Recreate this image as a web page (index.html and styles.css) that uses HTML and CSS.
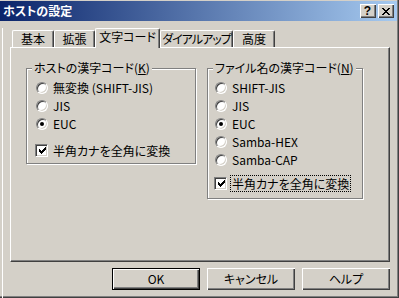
FILE: index.html
```html
<!DOCTYPE html>
<html lang="ja">
<head>
<meta charset="utf-8">
<title>ホストの設定</title>
<link rel="stylesheet" href="styles.css">
</head>
<body>
<div class="window">
  <div class="titlebar">
    <span class="title">ホストの設定</span>
    <div class="caps">
      <span class="cap help">?</span>
      <span class="cap close">
        <svg width="8" height="7" viewBox="0 0 8 7" shape-rendering="crispEdges">
          <rect x="0" y="0" width="2" height="1"/><rect x="6" y="0" width="2" height="1"/>
          <rect x="1" y="1" width="2" height="1"/><rect x="5" y="1" width="2" height="1"/>
          <rect x="2" y="2" width="4" height="1"/>
          <rect x="3" y="3" width="2" height="1"/>
          <rect x="2" y="4" width="4" height="1"/>
          <rect x="1" y="5" width="2" height="1"/><rect x="5" y="5" width="2" height="1"/>
          <rect x="0" y="6" width="2" height="1"/><rect x="6" y="6" width="2" height="1"/>
        </svg>
      </span>
    </div>
  </div>
  <div class="client">
    <div class="tabs">
      <div class="tab t-basic">基本</div>
      <div class="tab t-ext">拡張</div>
      <div class="tab t-code active">文字コード</div>
      <div class="tab t-dial">ダイアルアップ</div>
      <div class="tab t-adv">高度</div>
    </div>
    <div class="panel">
      <div class="group host">
        <div class="legend">ホストの漢字コード(<u>K</u>)</div>
        <div class="opt first"><span class="radio"></span><span class="lbl">無変換 (SHIFT-JIS)</span></div>
        <div class="opt"><span class="radio"></span><span class="lbl">JIS</span></div>
        <div class="opt"><span class="radio"><span class="dot"></span></span><span class="lbl">EUC</span></div>
        <div class="opt check">
          <span class="checkbox">
            <svg width="7" height="7" viewBox="0 0 7 7" shape-rendering="crispEdges">
              <rect x="0" y="2" width="1" height="3"/><rect x="1" y="3" width="1" height="3"/>
              <rect x="2" y="4" width="1" height="3"/><rect x="3" y="3" width="1" height="3"/>
              <rect x="4" y="2" width="1" height="3"/><rect x="5" y="1" width="1" height="3"/>
              <rect x="6" y="0" width="1" height="3"/>
            </svg>
          </span>
          <span class="clbl">半角カナを全角に変換</span>
        </div>
      </div>
      <div class="group file">
        <div class="legend">ファイル名の漢字コード(<u>N</u>)</div>
        <div class="opt first"><span class="radio"></span><span class="lbl">SHIFT-JIS</span></div>
        <div class="opt"><span class="radio"></span><span class="lbl">JIS</span></div>
        <div class="opt"><span class="radio"><span class="dot"></span></span><span class="lbl">EUC</span></div>
        <div class="opt"><span class="radio"></span><span class="lbl">Samba-HEX</span></div>
        <div class="opt"><span class="radio"></span><span class="lbl">Samba-CAP</span></div>
        <div class="opt check">
          <span class="checkbox">
            <svg width="7" height="7" viewBox="0 0 7 7" shape-rendering="crispEdges">
              <rect x="0" y="2" width="1" height="3"/><rect x="1" y="3" width="1" height="3"/>
              <rect x="2" y="4" width="1" height="3"/><rect x="3" y="3" width="1" height="3"/>
              <rect x="4" y="2" width="1" height="3"/><rect x="5" y="1" width="1" height="3"/>
              <rect x="6" y="0" width="1" height="3"/>
            </svg>
          </span>
          <span class="clbl focus">半角カナを全角に変換</span>
        </div>
      </div>
    </div>
    <div class="buttons">
      <div class="btn default">OK</div>
      <div class="btn">キャンセル</div>
      <div class="btn">ヘルプ</div>
    </div>
  </div>
</div>
</body>
</html>
```

FILE: styles.css
```css
html, body {
  margin: 0;
  padding: 0;
  background: #d4d0c8;
}

body {
  font-family: "Noto Sans CJK JP", "Liberation Sans", sans-serif;
  font-size: 12px;
  line-height: 14px;
  color: #000;
  font-feature-settings: "palt";
}

.window {
  width: 399px;
  height: 298px;
  box-sizing: border-box;
  background: #d4d0c8;
  box-shadow: inset -1px -1px #404040, inset -2px -2px #808080;
  overflow: hidden;
}

/* title bar */
.titlebar {
  margin: 1px 2px 0 0;
  height: 20px;
  display: flex;
  align-items: center;
  justify-content: space-between;
  background: linear-gradient(to right, #0a246a, #a6caf0);
  padding: 0 3px 0 3px;
}

.title {
  color: #fff;
  font-weight: bold;
  font-size: 12px;
  line-height: 14px;
}

.caps {
  display: flex;
  gap: 2px;
}

.cap {
  width: 16px;
  height: 14px;
  box-sizing: border-box;
  background: #d4d0c8;
  box-shadow: inset 1px 1px #fff, inset -1px -1px #404040, inset -2px -2px #808080;
  display: flex;
  align-items: center;
  justify-content: center;
}

.cap.help {
  font-family: "Liberation Sans", sans-serif;
  font-weight: bold;
  font-size: 12px;
  line-height: 12px;
  padding-right: 1px;
}

.cap.close svg {
  fill: #000;
  margin-right: 1px;
}

/* client area */
.client {
  margin-left: 2px;
  border-left: 1px solid #fff;
  height: 276px;
}

/* tabs */
.tabs {
  display: flex;
  align-items: flex-end;
  height: 20px;
  margin: 7px 0 -1px 9px;
  position: relative;
  z-index: 1;
}

.tab {
  height: 17px;
  margin-bottom: 1px;
  box-sizing: border-box;
  border-top: 1px solid #fff;
  border-left: 1px solid #fff;
  border-right: 1px solid #404040;
  border-radius: 2px 2px 0 0;
  box-shadow: inset -1px 0 #808080;
  display: flex;
  justify-content: center;
  line-height: 15px;
  white-space: nowrap;
  background: #d4d0c8;
}

.tab.active {
  height: 20px;
  margin-bottom: 0;
}

.t-basic { width: 42px; }
.t-ext { width: 41px; }
.t-code { width: 65px; }
.t-dial { width: 73px; letter-spacing: -1px; }
.t-adv { width: 42px; }

/* tab panel */
.panel {
  margin-left: 7px;
  width: 380px;
  height: 215px;
  box-sizing: border-box;
  border-top: 1px solid #fff;
  border-left: 1px solid #fff;
  border-right: 1px solid #404040;
  border-bottom: 1px solid #404040;
  box-shadow: inset -1px -1px #808080;
  display: flex;
  align-items: flex-start;
  gap: 11px;
  padding: 20px 0 0 15px;
}

/* group boxes */
.group {
  box-sizing: border-box;
  border: 1px solid #808080;
  box-shadow: inset 1px 1px #fff, 1px 1px #fff;
}

.group.host {
  width: 170px;
  padding-bottom: 4px;
}

.group.file {
  width: 156px;
  padding-bottom: 6px;
}

.legend {
  width: max-content;
  margin: -8px 0 0 5px;
  padding: 0 2px;
  line-height: 14px;
  background: #d4d0c8;
}

.legend u {
  text-underline-offset: 1px;
}

.opt {
  display: flex;
  align-items: center;
  height: 18px;
}

.opt.first { margin-top: 4px; }

.host .opt { padding-left: 9px; }
.host .opt.check { padding-left: 8px; margin-top: 8px; }
.file .opt { padding-left: 7px; }
.file .opt.check { padding-left: 6px; margin-top: 5px; }

.radio {
  width: 12px;
  height: 12px;
  box-sizing: border-box;
  border-radius: 50%;
  background: #fff;
  border: 1px solid;
  border-color: #808080 #fff #fff #808080;
  box-shadow: inset 1px 1px #404040, inset -1px -1px #d4d0c8;
  display: flex;
  align-items: center;
  justify-content: center;
  flex: none;
}

.dot {
  width: 4px;
  height: 4px;
  border-radius: 50%;
  background: #000;
}

.lbl {
  margin-left: 5px;
  white-space: nowrap;
}

.checkbox {
  width: 13px;
  height: 13px;
  box-sizing: border-box;
  background: #fff;
  border: 1px solid;
  border-color: #808080 #fff #fff #808080;
  box-shadow: inset 1px 1px #404040, inset -1px -1px #d4d0c8;
  display: flex;
  align-items: center;
  justify-content: center;
  flex: none;
}

.checkbox svg {
  fill: #000;
  margin: 1px 0 0 1px;
}

.clbl {
  margin-left: 3px;
  padding: 0 1px;
  border: 1px solid transparent;
  line-height: 15px;
  white-space: nowrap;
}

.clbl.focus {
  border: 1px dotted #000;
}

/* buttons */
.buttons {
  display: flex;
  gap: 7px;
  margin: 6px 0 0 109px;
}

.btn {
  width: 88px;
  height: 22px;
  box-sizing: border-box;
  background: #d4d0c8;
  box-shadow: inset 1px 1px #fff, inset -1px -1px #404040, inset -2px -2px #808080;
  display: flex;
  align-items: center;
  justify-content: center;
  padding-bottom: 1px;
}

.btn.default {
  border: 1px solid #000;
}
```
